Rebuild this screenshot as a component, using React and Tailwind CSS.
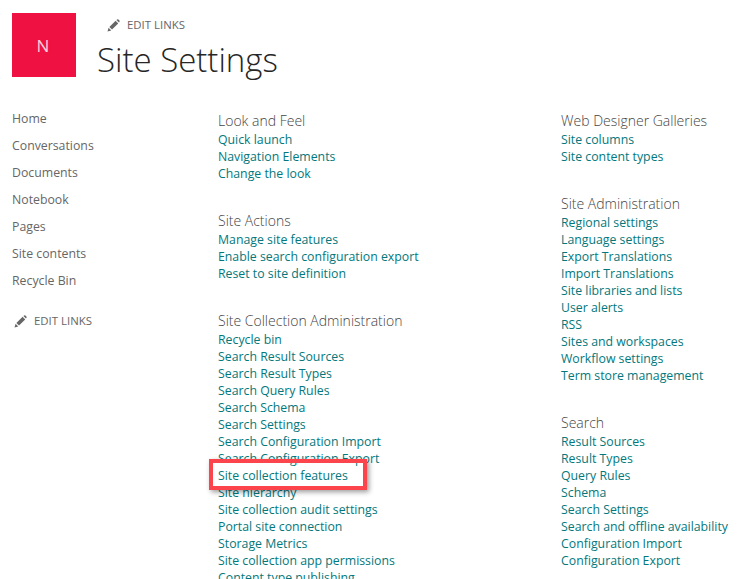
import React from 'react';

const font = { fontFamily: '"Open Sans", "Noto Sans", sans-serif' };

const navItems = ['Home', 'Conversations', 'Documents', 'Notebook', 'Pages', 'Site contents', 'Recycle Bin'];

const middle = [
  { title: 'Look and Feel', links: ['Quick launch', 'Navigation Elements', 'Change the look'] },
  { title: 'Site Actions', links: ['Manage site features', 'Enable search configuration export', 'Reset to site definition'] },
  {
    title: 'Site Collection Administration',
    links: [
      'Recycle bin',
      'Search Result Sources',
      'Search Result Types',
      'Search Query Rules',
      'Search Schema',
      'Search Settings',
      'Search Configuration Import',
      'Search Configuration Export',
      'Site collection features',
      'Site hierarchy',
      'Site collection audit settings',
      'Portal site connection',
      'Storage Metrics',
      'Site collection app permissions',
      'Content type publishing',
    ],
  },
];

const right = [
  { title: 'Web Designer Galleries', links: ['Site columns', 'Site content types'] },
  {
    title: 'Site Administration',
    links: [
      'Regional settings',
      'Language settings',
      'Export Translations',
      'Import Translations',
      'Site libraries and lists',
      'User alerts',
      'RSS',
      'Sites and workspaces',
      'Workflow settings',
      'Term store management',
    ],
  },
  {
    title: 'Search',
    links: [
      'Result Sources',
      'Result Types',
      'Query Rules',
      'Schema',
      'Search Settings',
      'Search and offline availability',
      'Configuration Import',
      'Configuration Export',
    ],
  },
];

const Pencil = () => (
  <svg width="13" height="13" viewBox="0 0 13 13" className="shrink-0">
    <path d="M0.5 12.5 L1.6 8.8 L4.2 11.4 Z" fill="#666666" />
    <path d="M2.4 8 L8.6 1.8 L11.2 4.4 L5 10.6 Z" fill="#666666" />
    <path d="M9.4 1 L10.2 0.4 Q10.8 0.1 11.4 0.6 L12.4 1.6 Q12.9 2.2 12.5 2.8 L12 3.6 Z" fill="#666666" />
  </svg>
);

const EditLinks = () => (
  <div className="flex items-center gap-[7px] text-[11.4px] leading-[14px] text-[#666666]">
    <Pencil />
    <span>EDIT LINKS</span>
  </div>
);

const Section = ({ section }) => (
  <div className="mb-[28px] pt-[1px]">
    <h3 className="mb-[1px] text-[14px] leading-[19px] font-light text-[#444444]">{section.title}</h3>
    {section.links.map((l) => (
      <div key={l} className="text-[12.3px] leading-[17px] text-[#03787c] whitespace-nowrap">{l}</div>
    ))}
  </div>
);

export default function App() {
  return (
    <div style={font} className="relative h-[579px] w-[749px] overflow-hidden bg-white">
      <div className="flex pl-3 pt-[13px]">
        <div className="flex h-16 w-16 items-center justify-center bg-[#ef1141] pr-[2px] pt-[2px] text-[17px] text-[#fbd0da]">N</div>
        <div className="ml-[21px]">
          <div className="ml-[10px] mt-[5px]"><EditLinks /></div>
          <h1 className="mt-[6px] text-[33px] leading-[44px] font-light text-[#262626]">Site Settings</h1>
        </div>
      </div>
      <div className="mt-[28px] flex pl-3">
        <div className="w-[206px] shrink-0">
          {navItems.map((n) => (
            <div key={n} className="h-[27px] text-[12.3px] leading-[17px] text-[#666666]">{n}</div>
          ))}
          <div className="ml-[2px] mt-[15px]"><EditLinks /></div>
        </div>
        <div className="w-[343px] shrink-0">
          {middle.map((s) => <Section key={s.title} section={s} />)}
        </div>
        <div>
          {right.map((s) => <Section key={s.title} section={s} />)}
        </div>
      </div>
      {/* red highlight drawn over the screenshot */}
      <div className="absolute left-[209px] top-[459px] h-[31px] w-[158px] border-4 border-[#fb444b] shadow-[2px_2px_5px_rgba(0,0,0,0.4)]" />
    </div>
  );
}
